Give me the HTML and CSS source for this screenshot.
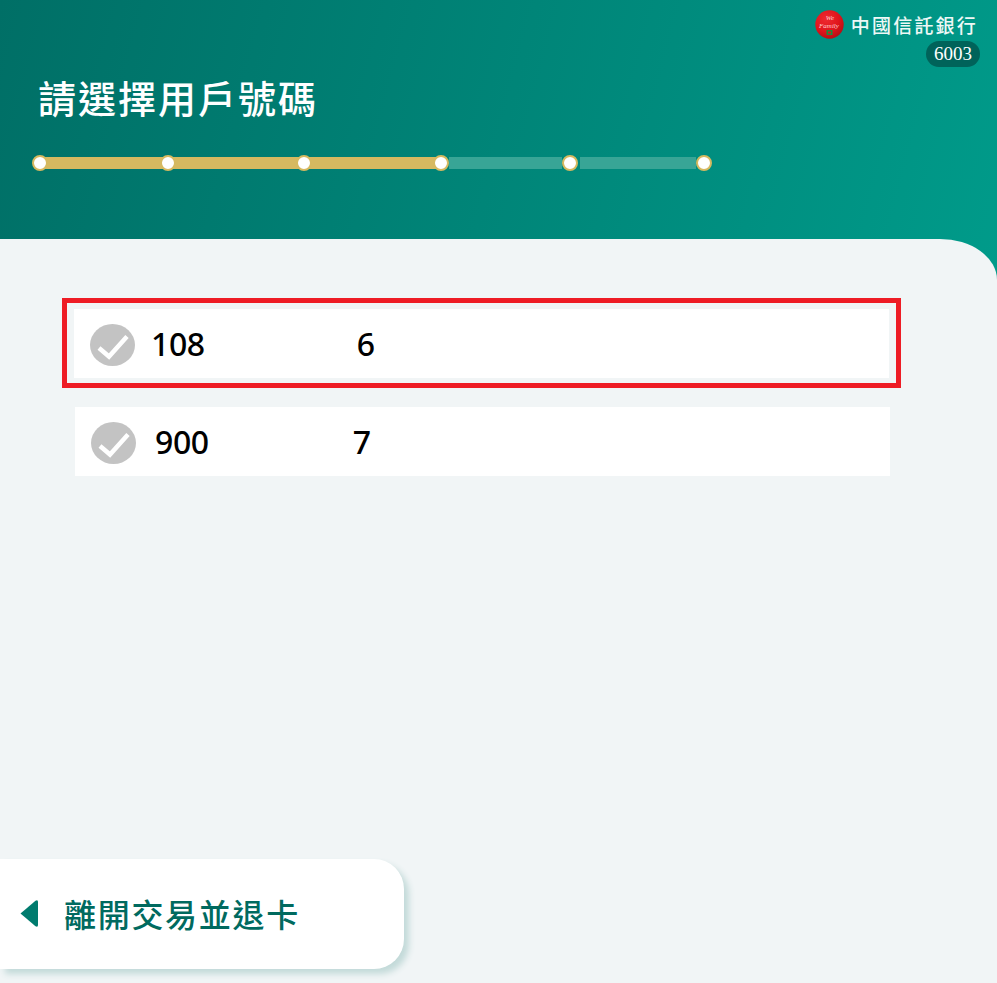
FILE: index.html
```html
<!DOCTYPE html>
<html lang="zh-Hant">
<head>
<meta charset="utf-8">
<title>請選擇用戶號碼</title>
<link rel="stylesheet" href="styles.css">
</head>
<body>
<div class="page">
  <header class="header">
    <div class="brand">
      <svg class="brand-logo" width="29" height="29" viewBox="0 0 29 29" aria-hidden="true">
        <defs>
          <radialGradient id="ball" cx="0.38" cy="0.3" r="0.75">
            <stop offset="0" stop-color="#ee2a30"/>
            <stop offset="0.6" stop-color="#e0141c"/>
            <stop offset="1" stop-color="#b30d14"/>
          </radialGradient>
        </defs>
        <circle cx="14.5" cy="14.5" r="14.2" fill="url(#ball)"/>
        <text class="logo-script" x="15" y="10">We</text>
        <text class="logo-script" x="14" y="18">Family</text>
        <rect x="11.5" y="20" width="6" height="5" fill="#1f8a3c"/>
        <rect x="13" y="21.5" width="3" height="2" fill="#e0141c"/>
      </svg>
      <span class="brand-name">中國信託銀行</span>
    </div>
    <div class="badge-row"><span class="badge">6003</span></div>
    <h1 class="title">請選擇用戶號碼</h1>
    <div class="progress">
      <span class="dot"></span><span class="seg seg-done seg-a"></span>
      <span class="dot"></span><span class="seg seg-done seg-b"></span>
      <span class="dot"></span><span class="seg seg-done seg-c"></span>
      <span class="dot"></span><span class="seg seg-todo seg-d"></span>
      <span class="dot"></span><span class="seg seg-todo seg-e"></span>
      <span class="dot"></span>
    </div>
  </header>
  <main class="main">
    <div class="selected">
      <div class="row">
        <svg class="check" width="45" height="42" viewBox="0 0 45 42" aria-hidden="true">
          <ellipse cx="22.5" cy="21" rx="22.5" ry="21" fill="#c3c3c3"/>
          <path d="M9 24 L19 32.5 L37 12.5" fill="none" stroke="#fff" stroke-width="4.5" stroke-linejoin="miter"/>
        </svg>
        <span class="num num-a">108</span>
        <span class="num">6</span>
      </div>
    </div>
    <div class="row row-plain">
      <svg class="check" width="45" height="42" viewBox="0 0 45 42" aria-hidden="true">
        <ellipse cx="22.5" cy="21" rx="22.5" ry="21" fill="#c3c3c3"/>
        <path d="M9 24 L19 32.5 L37 12.5" fill="none" stroke="#fff" stroke-width="4.5" stroke-linejoin="miter"/>
      </svg>
      <span class="num num-b">900</span>
      <span class="num">7</span>
    </div>
    <button class="exit" type="button">
      <svg class="exit-arrow" width="18" height="27" viewBox="0 0 18 27" aria-hidden="true">
        <path d="M15.5 .8 L.5 13.5 L15.5 26.2 Q18 27.5 18 25 L18 2 Q18 -.5 15.5 .8 Z" fill="#007b6e"/>
      </svg>
      <span class="exit-label">離開交易並退卡</span>
    </button>
  </main>
</div>
</body>
</html>
```
FILE: styles.css
```css
* { box-sizing: border-box; }
html, body { margin: 0; padding: 0; }
body {
  font-family: "Noto Sans CJK TC", "Noto Sans", sans-serif;
  background: #f1f5f6;
}
.page {
  width: 997px;
  height: 983px;
  overflow: hidden;
  display: flex;
  flex-direction: column;
  background: linear-gradient(105deg, #006f66 0%, #009b8a 100%) 0 0 / 997px 290px no-repeat;
}
.header {
  height: 239px;
  flex: none;
  display: flex;
  flex-direction: column;
  padding-top: 10px;
}
.brand {
  display: flex;
  align-items: center;
  justify-content: flex-end;
  padding-right: 20px;
  height: 29px;
  gap: 7px;
}
.brand-logo { flex: none; }
.logo-script {
  font-family: "Liberation Serif", serif;
  font-style: italic;
  font-size: 7px;
  fill: #ffd0d0;
  text-anchor: middle;
}
.brand-name {
  font-size: 19px;
  line-height: 29px;
  letter-spacing: 2.2px;
  color: #eef8f6;
  font-weight: 500;
  margin-right: -1px;
}
.badge-row {
  display: flex;
  justify-content: flex-end;
  padding-right: 17px;
  margin-top: 2px;
}
.badge {
  width: 54px;
  height: 26px;
  border-radius: 13px;
  background: #00635a;
  color: #fff;
  font-family: "Liberation Serif", serif;
  font-size: 19px;
  line-height: 26px;
  text-align: center;
}
.title {
  margin: 3px 0 0 38px;
  font-size: 38px;
  line-height: 54px;
  font-weight: 500;
  letter-spacing: 2px;
  color: #fff;
}
.progress {
  display: flex;
  align-items: center;
  margin: 31px 0 0 32px;
  height: 16px;
}
.dot {
  flex: none;
  width: 16px;
  height: 16px;
  border-radius: 50%;
  background: #fff;
  border: 2px solid #d6b960;
  position: relative;
  z-index: 1;
}
.seg { flex: none; height: 12px; }
.seg-done { background: #d6b960; margin: 0 -8px; }
.seg-todo { background: #38a596; }
.seg-a { width: 128px; }
.seg-b { width: 136px; }
.seg-c { width: 137px; }
.seg-d { width: 113px; }
.seg-e { width: 116px; margin-left: 2px; }
.main {
  flex: 1;
  position: relative;
  display: flex;
  flex-direction: column;
  align-items: flex-start;
  background: #f1f5f6;
  border-top-right-radius: 57px 41px;
  padding-top: 59px;
}
.selected {
  margin-left: 62px;
  width: 839px;
  height: 90px;
  border: 5px solid #ee1c25;
  padding: 6px 7px 5px;
}
.row {
  display: flex;
  align-items: center;
  background: #fff;
  height: 69px;
  padding-left: 16px;
}
.row-plain {
  margin: 19px 0 0 75px;
  width: 815px;
}
.check { flex: none; margin-top: 2px; }
.num {
  font-family: "Noto Sans", sans-serif;
  font-size: 32px;
  font-weight: 500;
  letter-spacing: -0.4px;
  line-height: 40px;
  color: #000;
}
.num-a { margin-left: 16px; margin-right: 152px; }
.num-b { margin-left: 19px; margin-right: 144px; }
.exit {
  margin-top: auto;
  margin-bottom: 14px;
  width: 404px;
  height: 110px;
  padding: 0 0 0 20px;
  border: 0;
  border-radius: 0 30px 30px 0;
  background: #fff;
  box-shadow: 5px 5px 6px #c3dad9;
  display: flex;
  align-items: center;
  gap: 26px;
  font-family: inherit;
}
.exit-arrow { flex: none; margin-top: -1px; }
.exit-label {
  font-size: 32px;
  line-height: 44px;
  font-weight: 500;
  letter-spacing: 1.7px;
  color: #006a5f;
  margin-top: -2px;
}
```
